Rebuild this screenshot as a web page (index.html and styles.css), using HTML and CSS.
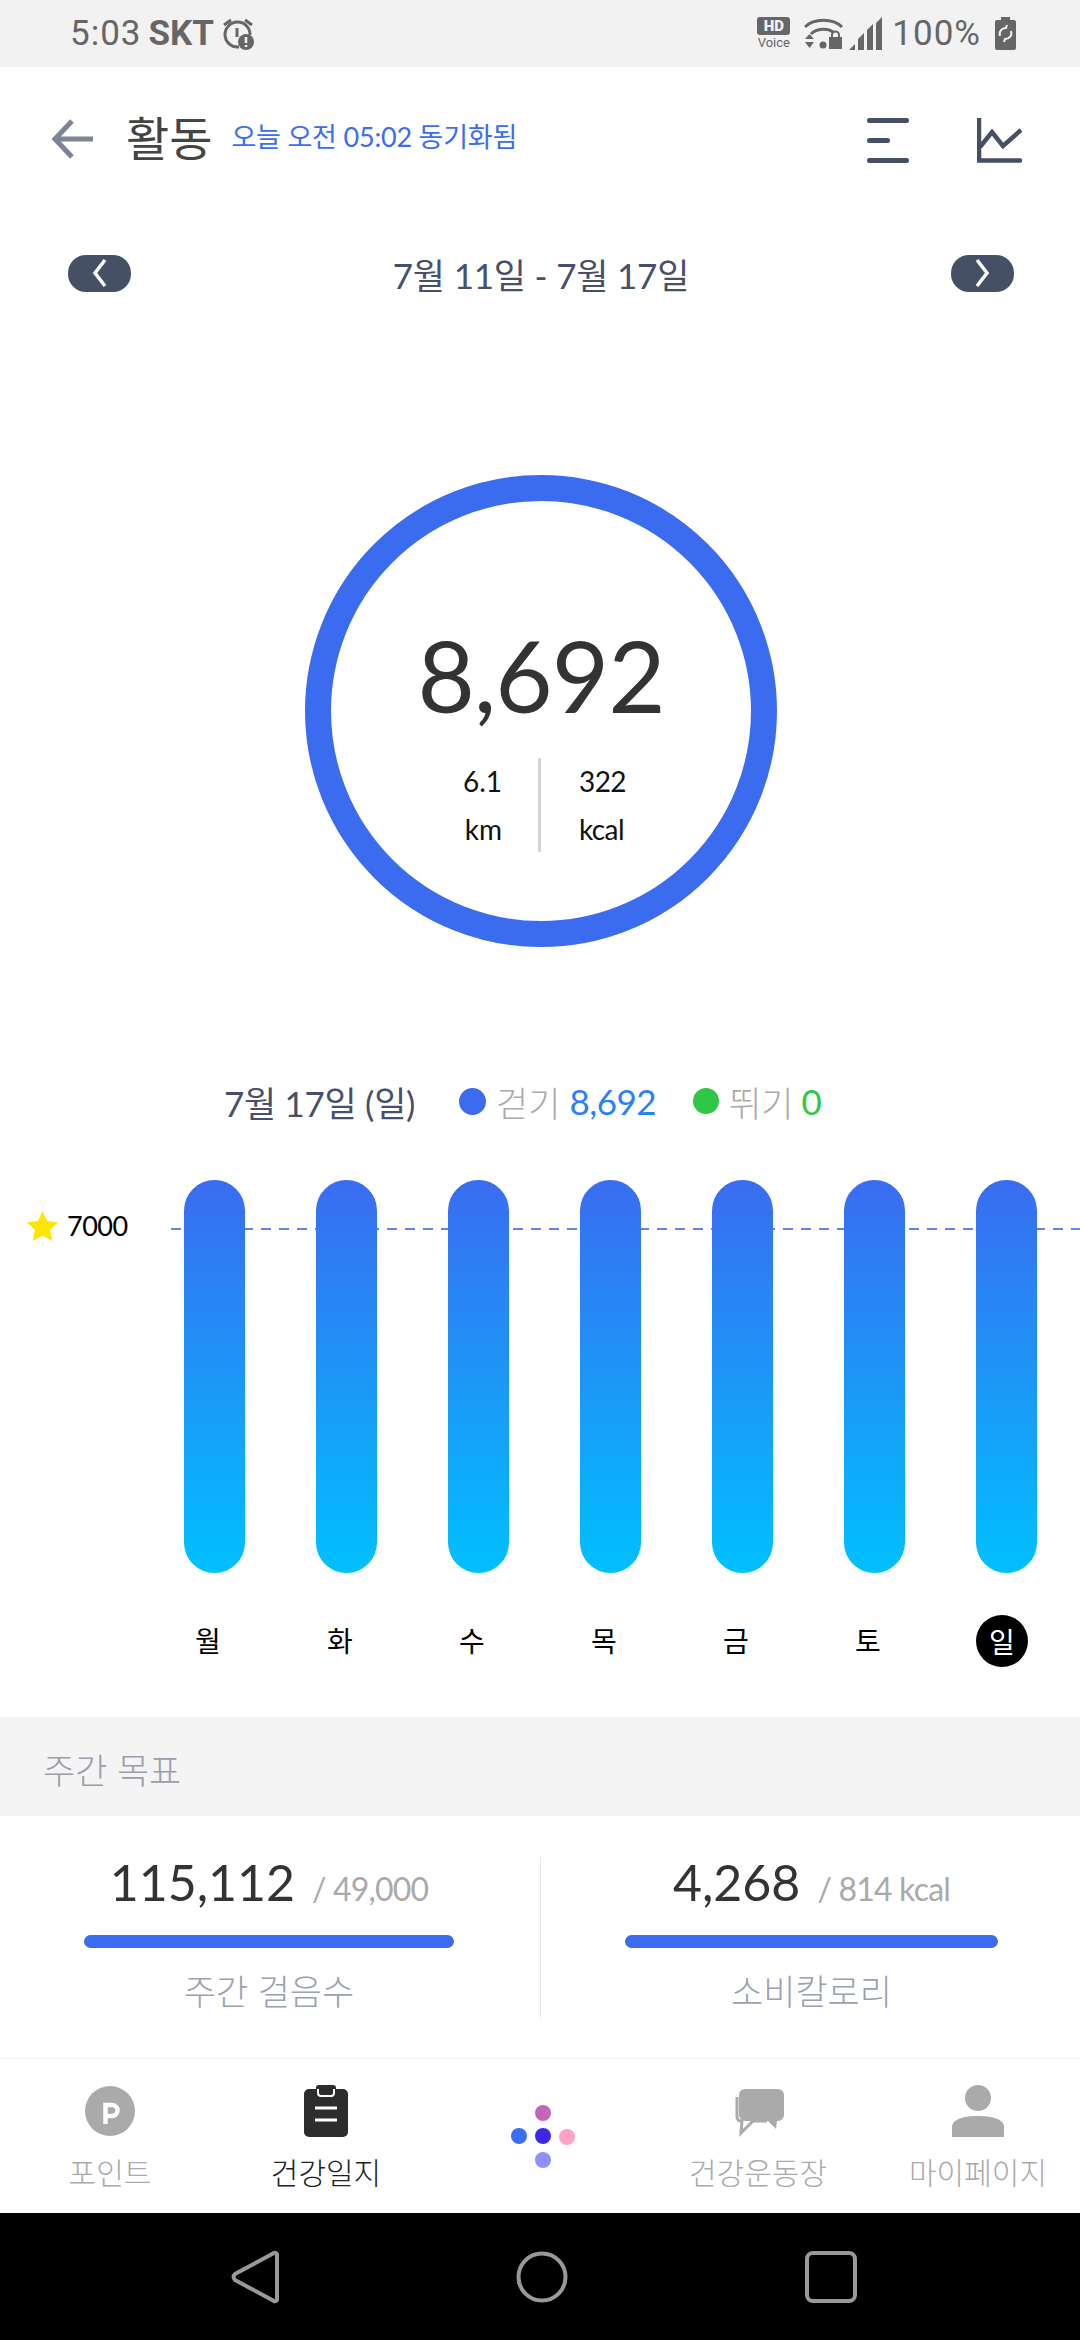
FILE: index.html
```html
<!DOCTYPE html>
<html lang="ko">
<head>
    <meta charset="UTF-8">
    <title>활동</title>
    <link rel="stylesheet" href="styles.css">
</head>
<body>
    <div class="status">
        <span class="time">5:03</span>
        <b class="carrier">SKT</b>
        <svg class="alarm" width="32" height="33" viewBox="0 0 32 33">
            <path d="M2 8 9 3M23 3l7 5" fill="none" stroke="#666" stroke-width="3"/>
            <path d="M17 30A12.500 12.500 0 1 1 28 18" fill="none" stroke="#666" stroke-width="3"/>
            <path d="M15 11v9" stroke="#666" stroke-width="3"/>
            <circle cx="24" cy="25" r="8" fill="#666"/>
            <path d="M24 20v6M24 28v2" stroke="#f2f2f2" stroke-width="2.500"/>
        </svg>
        <div class="status-right">
            <div class="hd">
                <span class="hd-box">HD</span>
                <span class="hd-voice">Voice</span>
            </div>
            <svg width="39" height="33" viewBox="0 0 39 33">
                <path d="M1 10C10 1 29 1 38 10M7 17C13 11 24 11 29 15" fill="none" stroke="#666" stroke-width="3"/>
                <path d="M1 22h9l-4.500-5zM1 25h9l-4.500 6z" fill="#666"/>
                <circle cx="19" cy="28" r="3.500" fill="#666"/>
                <path d="M25 20h13v12H25z" fill="#666"/>
                <path d="M28 21v-3a3.500 3.500 0 0 1 7 0v3" fill="none" stroke="#666" stroke-width="2"/>
            </svg>
            <svg width="33" height="33" viewBox="0 0 33 33">
                <path d="M0 33l6-6v6zM9 33V22l6-6v17zM18 33V13l6-6v26zM27 33V6l6-6v33z" fill="#666"/>
            </svg>
            <span class="battery-text">100%</span>
            <svg width="21" height="33" viewBox="0 0 21 33">
                <path d="M6 0h9v3h4a2 2 0 0 1 2 2v26a2 2 0 0 1-2 2H2a2 2 0 0 1-2-2V5a2 2 0 0 1 2-2h4z" fill="#666"/>
                <path d="M5 19a6 6 0 0 1 6-8l1-3M16 14a6 6 0 0 1-6 8l-1 3" fill="none" stroke="#f2f2f2" stroke-width="2"/>
            </svg>
        </div>
    </div>

    <header class="top">
        <svg class="back" width="41" height="40" viewBox="0 0 41 40">
            <path d="M20 2 3 20l17 18M3 20h38" fill="none" stroke="#7d8494" stroke-width="5"/>
        </svg>
        <h1 class="title">활동</h1>
        <span class="synced">오늘 오전 05:02 동기화됨</span>
        <svg class="menu" width="42" height="45" viewBox="0 0 42 45">
            <path d="M2.500 2.500h37M2.500 22.500h18M2.500 42.500h37" fill="none" stroke="#465064" stroke-width="5" stroke-linecap="round"/>
        </svg>
        <svg class="chart-icon" width="45" height="45" viewBox="0 0 45 45">
            <path d="M2 0v42.500h41" fill="none" stroke="#465064" stroke-width="4.500" stroke-linecap="round"/>
            <path d="M3 29 15 14l11 14L44 12" fill="none" stroke="#465064" stroke-width="4.500"/>
        </svg>
    </header>

    <div class="week">
        <button class="pill">
            <svg width="16" height="30" viewBox="0 0 16 30"><path d="M13 2 3 15l10 13" fill="none" stroke="#fff" stroke-width="3.500"/></svg>
        </button>
        <span class="week-text">7월 11일 - 7월 17일</span>
        <button class="pill">
            <svg width="16" height="30" viewBox="0 0 16 30"><path d="M3 2l10 13L3 28" fill="none" stroke="#fff" stroke-width="3.500"/></svg>
        </button>
    </div>

    <section class="ring-wrap">
        <div class="ring">
            <div class="steps">8,692</div>
            <div class="ring-sub">
                <div class="ring-col"><span>6.1</span><span>km</span></div>
                <div class="ring-col ring-col-right"><span>322</span><span>kcal</span></div>
            </div>
        </div>
    </section>

    <div class="legend">
        <span class="legend-date">7월 17일 (일)</span>
        <span class="dot dot-blue"></span>
        <span class="legend-label">걷기</span>
        <span class="legend-blue">8,692</span>
        <span class="dot dot-green"></span>
        <span class="legend-label">뛰기</span>
        <span class="legend-green">0</span>
    </div>

    <section class="chart">
        <div class="goal">
            <svg width="31" height="30" viewBox="0 0 31 30">
                <path d="M15.500 0l4.700 10 11 1.400-8.100 7.500 2.200 11-9.800-5.500-9.800 5.500 2.200-11L0 11.400 11 10z" fill="#ffe600"/>
            </svg>
            <span>7000</span>
        </div>
        <div class="goal-line"></div>
        <div class="bar"></div>
        <div class="bar"></div>
        <div class="bar"></div>
        <div class="bar"></div>
        <div class="bar"></div>
        <div class="bar"></div>
        <div class="bar"></div>
    </section>

    <div class="days">
        <span class="day">월</span>
        <span class="day">화</span>
        <span class="day">수</span>
        <span class="day">목</span>
        <span class="day">금</span>
        <span class="day">토</span>
        <span class="day"><span class="day-on">일</span></span>
    </div>

    <div class="goals-head">주간 목표</div>

    <section class="goals">
        <div class="goal-col goal-left">
            <div class="goal-value"><span class="big">115,112</span><span class="of">/ 49,000</span></div>
            <div class="progress"></div>
            <div class="goal-name">주간 걸음수</div>
        </div>
        <div class="goal-col goal-right">
            <div class="goal-value"><span class="big">4,268</span><span class="of">/ 814 kcal</span></div>
            <div class="progress"></div>
            <div class="goal-name">소비칼로리</div>
        </div>
    </section>

    <nav class="tabs">
        <div class="tab">
            <svg width="50" height="50" viewBox="0 0 50 50">
                <circle cx="25" cy="25" r="25" fill="#aaa"/>
                <path d="M20.500 38V19h6.500a5.500 5.500 0 0 1 0 11h-6.500" fill="none" stroke="#fff" stroke-width="4.500"/>
            </svg>
            <span>포인트</span>
        </div>
        <div class="tab tab-on">
            <svg width="44" height="52" viewBox="0 0 44 52">
                <path d="M5 4h7V3a3 3 0 0 1 3-3h14a3 3 0 0 1 3 3v1h7a5 5 0 0 1 5 5v38a5 5 0 0 1-5 5H5a5 5 0 0 1-5-5V9a5 5 0 0 1 5-5z" fill="#2d2d2d"/>
                <path d="M14 4v4a3 3 0 0 0 3 3h10a3 3 0 0 0 3-3V4" fill="none" stroke="#fff" stroke-width="2"/>
                <path d="M11 23h22M11 35h22" stroke="#fff" stroke-width="3"/>
            </svg>
            <span>건강일지</span>
        </div>
        <div class="tab tab-logo">
            <svg width="64" height="64" viewBox="0 0 64 64">
                <circle cx="32" cy="8" r="8" fill="#c565b9"/>
                <circle cx="8" cy="31" r="8" fill="#3c6cf0"/>
                <circle cx="32" cy="31" r="8" fill="#3a27e8"/>
                <circle cx="56" cy="32" r="8" fill="#ffa2c6"/>
                <circle cx="32" cy="55" r="8" fill="#8f8fff"/>
            </svg>
        </div>
        <div class="tab tab-chat">
            <svg width="52" height="44" viewBox="0 0 52 44">
                <path d="M5 8v20a4 4 0 0 0 4 4h1l-1 12 12-12h14" fill="none" stroke="#aaa" stroke-width="3"/>
                <path d="M13 0h33a6 6 0 0 1 6 6v20a6 6 0 0 1-6 6h-1l-1 8-8-8H13a6 6 0 0 1-6-6V6a6 6 0 0 1 6-6z" fill="#aaa"/>
            </svg>
            <span>건강운동장</span>
        </div>
        <div class="tab">
            <svg width="52" height="52" viewBox="0 0 52 52">
                <ellipse cx="26" cy="13" rx="13" ry="13" fill="#aaa"/>
                <path d="M0 52V42C0 34 12 31 26 31s26 3 26 11v10z" fill="#aaa"/>
            </svg>
            <span>마이페이지</span>
        </div>
    </nav>

    <div class="sysnav">
        <svg width="48" height="54" viewBox="0 0 48 54">
            <path d="M43 3a2 2 0 0 1 3 2v44a2 2 0 0 1-3 2L4 30a4 4 0 0 1 0-6z" fill="none" stroke="#999" stroke-width="4" stroke-linejoin="round"/>
        </svg>
        <svg width="52" height="54" viewBox="0 0 52 54">
            <circle cx="26" cy="27" r="23.500" fill="none" stroke="#999" stroke-width="4"/>
        </svg>
        <svg width="52" height="54" viewBox="0 0 52 54">
            <rect x="2" y="3" width="48" height="48" rx="6" fill="none" stroke="#999" stroke-width="4"/>
        </svg>
    </div>
</body>
</html>
```

FILE: styles.css
```css
* {
    box-sizing: border-box;
}
body {
    margin: 0;
    width: 1080px;
    height: 2340px;
    overflow: hidden;
    background: #fff;
    font-family: Lato, "Noto Sans CJK KR", sans-serif;
    color: #333;
}

/* status bar */
.status {
    height: 67px;
    background: #f2f2f2;
    display: flex;
    align-items: center;
    padding: 0 64px 0 70px;
    font-family: Roboto, sans-serif;
    color: #666;
    font-size: 35px;
}
.time {
    letter-spacing: 1px;
}
.carrier {
    margin-left: 7px;
    font-weight: 700;
}
.alarm {
    margin-left: 8px;
}
.status-right {
    margin-left: auto;
    display: flex;
    align-items: center;
}
.hd {
    width: 33px;
    margin-right: 14px;
    display: flex;
    flex-direction: column;
    align-items: center;
}
.hd-box {
    width: 33px;
    height: 18px;
    border-radius: 3px;
    background: #666;
    color: #f2f2f2;
    font-size: 15px;
    font-weight: 900;
    line-height: 18px;
    text-align: center;
}
.hd-voice {
    font-size: 13px;
    line-height: 15px;
}
.status-right svg:nth-of-type(2) {
    margin-left: 6px;
}
.battery-text {
    margin: 0 14px 0 10px;
    letter-spacing: 1px;
}

/* header */
.top {
    height: 136px;
    display: flex;
    align-items: center;
    padding-left: 52px;
}
.back {
    margin-top: 8px;
}
.title {
    margin: 0 0 0 33px;
    font-size: 47px;
    font-weight: 400;
    color: #444;
}
.synced {
    margin: 0 0 0 19px;
    font-size: 27px;
    letter-spacing: -0.2px;
    color: #3a6cf5;
}
.menu {
    margin: 10px 0 0 auto;
}
.chart-icon {
    margin: 10px 58px 0 68px;
}

.week {
    height: 142px;
    padding: 0 66px 2px 68px;
    display: flex;
    align-items: center;
    justify-content: space-between;
}
.pill {
    width: 63px;
    height: 37px;
    padding: 0;
    border: none;
    border-radius: 18px;
    background: #465064;
    display: flex;
    align-items: center;
    justify-content: center;
}
.week-text {
    font-size: 35px;
    letter-spacing: -0.2px;
    color: #47506a;
}

/* big ring */
.ring-wrap {
    height: 715px;
    padding: 130px 0 0 2px;
    display: flex;
    justify-content: center;
}
.ring {
    width: 472px;
    height: 472px;
    border: 26px solid #3b6cf0;
    border-radius: 50%;
    display: flex;
    flex-direction: column;
    align-items: center;
}
.steps {
    margin-top: 114px;
    font-size: 99px;
    letter-spacing: -1px;
    line-height: 120px;
    color: #333;
}
.ring-sub {
    margin-top: 23px;
    display: flex;
    width: 420px;
    height: 94px;
    color: #111;
    font-size: 28px;
}
.ring-col {
    width: 212px;
    display: flex;
    flex-direction: column;
    align-items: flex-end;
    justify-content: space-between;
    padding: 5px 36px 5px 0;
    line-height: 36px;
    text-align: center;
    border-right: 3px solid #d5d5d5;
}
.ring-col-right {
    border-right: none;
    padding: 5px 0 5px 38px;
    align-items: flex-start;
    letter-spacing: -0.6px;
}

/* legend */
.legend {
    height: 86px;
    padding: 0 0 4px 224px;
    display: flex;
    align-items: center;
    font-size: 35px;
}
.legend-date {
    width: 235px;
    letter-spacing: -0.3px;
    color: #47506a;
}
.dot {
    width: 27px;
    height: 27px;
    border-radius: 50%;
}
.dot-blue {
    background: #3b6cf0;
}
.dot-green {
    width: 26px;
    height: 26px;
    margin-left: 37px;
    background: #2fc844;
}
.legend-label {
    margin-left: 10px;
    font-weight: 300;
    color: #aaa;
}
.legend-blue {
    margin-left: 9px;
    letter-spacing: -0.5px;
    color: #2a80f5;
}
.legend-green {
    margin-left: 8px;
    color: #2fc844;
}

/* weekly bars */
.chart {
    position: relative;
    height: 427px;
    padding: 34px 0 0 184px;
    display: flex;
    gap: 71px;
}
.bar {
    position: relative;
    width: 61px;
    height: 393px;
    border-radius: 31px;
    background: linear-gradient(#3a6cf0, #00c0ff);
}
.goal {
    position: absolute;
    left: 27px;
    top: 63px;
    display: flex;
    align-items: center;
    gap: 9px;
    font-size: 27px;
    letter-spacing: -0.5px;
    color: #000;
}
.goal-line {
    position: absolute;
    left: 171px;
    right: 0;
    top: 82px;
    height: 2px;
    background: repeating-linear-gradient(90deg, #5f86ee 0 10px, transparent 10px 18px);
}

.days {
    height: 52px;
    margin-top: 42px;
    padding-left: 142px;
    display: flex;
    font-size: 28px;
    color: #000;
}
.day {
    width: 132px;
    padding-bottom: 2px;
    display: flex;
    align-items: center;
    justify-content: center;
}
.day-on {
    width: 52px;
    height: 52px;
    margin: 2px 0 0 4px;
    border-radius: 50%;
    background: #000;
    color: #fff;
    display: flex;
    align-items: center;
    justify-content: center;
}

.goals-head {
    height: 99px;
    margin-top: 50px;
    padding: 4px 43px 0;
    background: #f4f4f4;
    display: flex;
    align-items: center;
    font-size: 35px;
    font-weight: 300;
    color: #9a9ea8;
}

/* weekly goals */
.goals {
    height: 242px;
    position: relative;
    display: flex;
}
.goals::before {
    content: "";
    position: absolute;
    left: 540px;
    top: 41px;
    height: 162px;
    border-left: 1px solid #e8e8e8;
}
.goal-col {
    display: flex;
    flex-direction: column;
    align-items: center;
}
.goal-left {
    width: 370px;
    margin-left: 84px;
}
.goal-right {
    width: 373px;
    margin-left: 171px;
}
.goal-value {
    height: 119px;
    padding-top: 35px;
    white-space: nowrap;
}
.big {
    font-size: 50px;
    line-height: 62px;
    color: #333;
}
.of {
    margin-left: 17px;
    font-size: 32px;
    letter-spacing: -0.8px;
    color: #aaa;
}
.progress {
    width: 100%;
    height: 13px;
    border-radius: 7px;
    background: #3b6cf0;
}
.goal-name {
    margin-top: 16px;
    font-size: 35px;
    font-weight: 300;
    color: #9aa1b3;
}

/* bottom tabs */
.tabs {
    height: 155px;
    border-top: 1px solid #f4f4f4;
    display: grid;
    grid-template-columns: 220px 212px 222px 222px 204px;
    font-size: 30px;
    font-weight: 300;
    color: #aaa;
}
.tab {
    padding-top: 26px;
    display: flex;
    flex-direction: column;
    align-items: center;
    white-space: nowrap;
}
.tab svg {
    height: 52px;
}
.tab span {
    margin-top: 14px;
    line-height: 42px;
}
.tab-on {
    color: #222;
}
.tab-logo svg {
    height: 64px;
    margin-top: 20px;
}
.tab-chat {
    padding-right: 14px;
}

.sysnav {
    height: 127px;
    background: #000;
    display: flex;
    align-items: center;
    padding: 0 223px 0 231px;
    justify-content: space-between;
}
```
